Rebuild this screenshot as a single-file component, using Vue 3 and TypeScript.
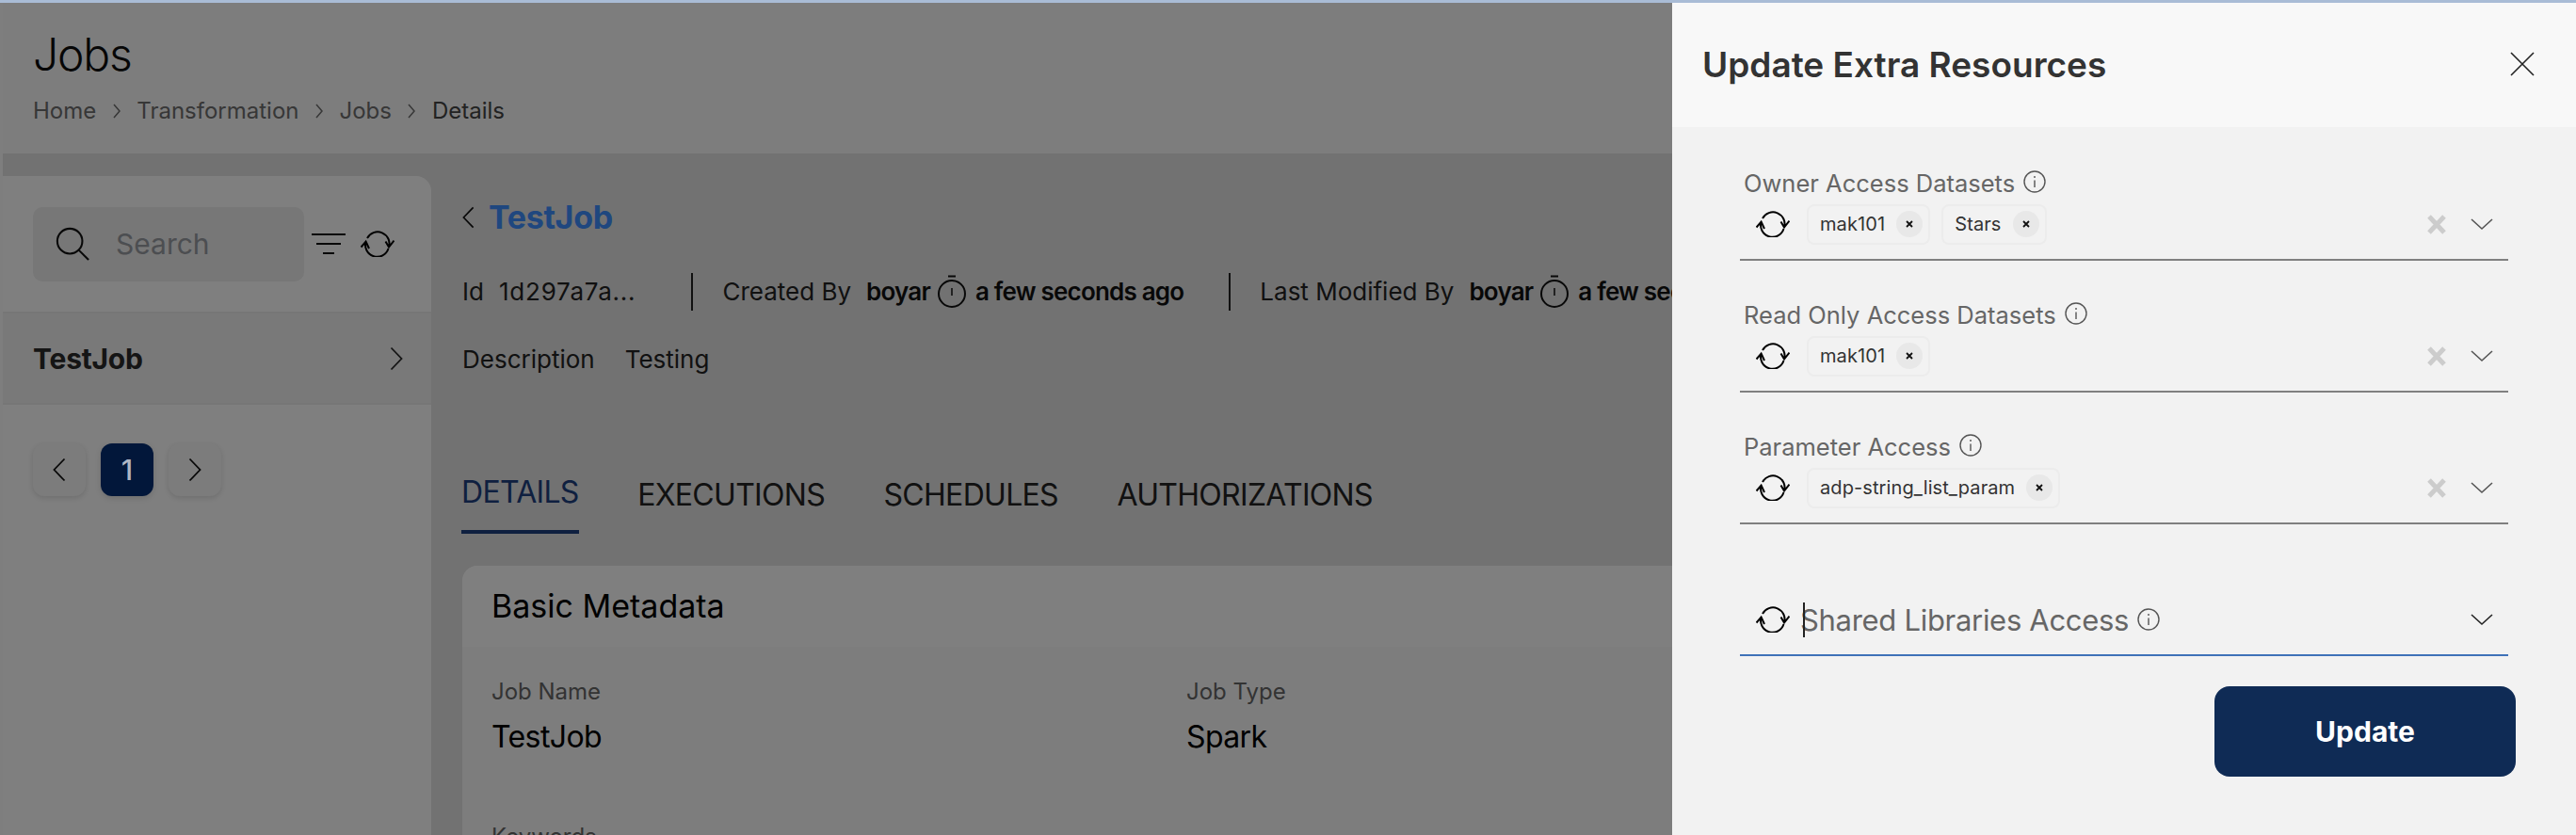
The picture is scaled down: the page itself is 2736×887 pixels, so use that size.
<template>
  <div class="app">
    <div class="top-strip"></div>
    <div class="stage">
      <header class="page-head">
        <h1 class="page-title">Jobs</h1>
        <nav class="crumbs">
          <template v-for="(c, i) in crumbs" :key="c">
            <span :class="{ 'crumb-last': i === crumbs.length - 1 }">{{ c }}</span>
            <svg v-if="i < crumbs.length - 1" class="crumb-sep" viewBox="0 0 10 18"><path d="M2 2l6 7-6 7" /></svg>
          </template>
        </nav>
      </header>

      <div class="page-body">
        <aside class="sidebar">
          <div class="side-tools">
            <div class="search-box">
              <svg class="search-icon" viewBox="0 0 38 38"><circle cx="16" cy="16" r="14" /><path d="M26 26l11 11" /></svg>
              <span class="search-text">Search</span>
            </div>
            <svg class="filter-icon" viewBox="0 0 36 24"><path d="M0 2h36M5 12h26M12 22h12" /></svg>
            <svg class="sync-icon side-sync" viewBox="0 0 36 28"><path :d="syncPath" /></svg>
          </div>
          <div class="job-row">
            <span>TestJob</span>
            <svg class="chev-right" viewBox="0 0 14 26"><path d="M1.500 1.500L12.500 13l-11 11.500" /></svg>
          </div>
          <div class="pager">
            <div class="page-btn"><svg viewBox="0 0 14 26"><path d="M12.500 1.500L1.500 13l11 11.500" /></svg></div>
            <div class="page-btn page-active">1</div>
            <div class="page-btn"><svg viewBox="0 0 14 26"><path d="M1.500 1.500L12.500 13l-11 11.500" /></svg></div>
          </div>
        </aside>

        <main class="main">
          <div class="job-title">
            <svg class="back" viewBox="0 0 14 26"><path d="M12.500 1.500L1.500 13l11 11.500" /></svg>
            <span>TestJob</span>
          </div>
          <div class="meta">
            <span>Id</span><span class="meta-id">1d297a7a...</span>
            <i class="meta-sep"></i>
            <span>Created By</span><b class="meta-user">boyar</b>
            <svg class="clock" viewBox="0 0 30 36"><path d="M11 1.500h8" /><circle cx="15" cy="20" r="14" /><path class="tick" d="M15 14v8" /></svg>
            <b class="meta-when">a few seconds ago</b>
            <i class="meta-sep"></i>
            <span>Last Modified By</span><b class="meta-user">boyar</b>
            <svg class="clock" viewBox="0 0 30 36"><path d="M11 1.500h8" /><circle cx="15" cy="20" r="14" /><path class="tick" d="M15 14v8" /></svg>
            <b class="meta-when">a few seconds ago</b>
          </div>
          <div class="desc"><span>Description</span><span>Testing</span></div>
          <div class="tabs">
            <div v-for="(t, i) in tabs" :key="t" :class="['tab', { 'tab-active': i === 0 }]">{{ t }}</div>
          </div>
          <section class="card">
            <div class="card-head">Basic Metadata</div>
            <div class="card-body">
              <div v-for="f in metadata" :key="f.label" class="card-field">
                <div class="field-label">{{ f.label }}</div>
                <div class="field-value">{{ f.value }}</div>
              </div>
            </div>
          </section>
        </main>
      </div>

      <div class="backdrop"></div>

      <aside class="drawer">
        <div class="drawer-head">
          <span class="drawer-title">Update Extra Resources</span>
          <svg class="close" viewBox="0 0 26 26"><path d="M1 1l24 24M25 1L1 25" /></svg>
        </div>
        <div class="drawer-body">
          <div v-for="f in fields" :key="f.label" class="res-field">
            <div class="res-label">
              <span>{{ f.label }}</span>
              <svg class="info" viewBox="0 0 24 24"><circle cx="12" cy="12" r="11" /><path d="M12 6v2M12 10.500v7.500" /></svg>
            </div>
            <div class="res-control">
              <svg class="sync-icon" viewBox="0 0 36 28"><path :d="syncPath" /></svg>
              <div v-for="c in f.chips" :key="c" class="chip">
                <span>{{ c }}</span>
                <span class="chip-x"><svg viewBox="0 0 8 8"><path d="M1 1l6 6M7 1L1 7" /></svg></span>
              </div>
              <svg class="clear" viewBox="0 0 20 21"><path d="M2 2l16 17M18 2L2 19" /></svg>
              <svg class="chev-down" viewBox="0 0 24 14"><path d="M1 2l11 10 11-10" /></svg>
            </div>
          </div>

          <div class="res-control res-focus">
            <svg class="sync-icon" viewBox="0 0 36 28"><path :d="syncPath" /></svg>
            <div class="placeholder">
              <i class="caret"></i>
              <span>Shared Libraries Access</span>
              <svg class="info" viewBox="0 0 24 24"><circle cx="12" cy="12" r="11" /><path d="M12 6v2M12 10.500v7.500" /></svg>
            </div>
            <svg class="chev-down chev-dark" viewBox="0 0 24 14"><path d="M1 2l11 10 11-10" /></svg>
          </div>

          <div class="actions">
            <button class="update-btn" type="button">Update</button>
          </div>
        </div>
      </aside>
    </div>
  </div>
</template>

<script setup lang="ts">
const crumbs = ['Home', 'Transformation', 'Jobs', 'Details']
const tabs = ['DETAILS', 'EXECUTIONS', 'SCHEDULES', 'AUTHORIZATIONS']

// two open arcs, each ending in its own arrowhead
const syncPath =
  'M7 8A12.5 12.5 0 0 1 30 17.500M26.500 11.500l3.500 6 5.500-7M29.500 19A12.500 12.500 0 0 1 5.600 11.500M0.500 17.500l5.100-6 3.400 7.500'

const metadata = [
  { label: 'Job Name', value: 'TestJob' },
  { label: 'Job Type', value: 'Spark' },
  { label: 'Keywords', value: '' }
]

const fields = [
  { label: 'Owner Access Datasets', chips: ['mak101', 'Stars'] },
  { label: 'Read Only Access Datasets', chips: ['mak101'] },
  { label: 'Parameter Access', chips: ['adp-string_list_param'] }
]
</script>

<style>
html,
body {
  margin: 0;
  background: #f2f2f2;
}
</style>

<style scoped>
.app {
  width: 2736px;
  height: 887px;
  overflow: hidden;
  font-family: Inter, "Liberation Sans", sans-serif;
  color: #111;
}

svg {
  flex: none;
  display: block;
  fill: none;
  stroke: currentColor;
  stroke-width: 2;
}

.top-strip {
  height: 3px;
  background: #a9bcd6;
}

.stage {
  position: relative;
  height: 884px;
  padding-left: 3px;
  box-sizing: border-box;
  background: #fcfcfc;
  overflow: hidden;
}

.page-head {
  height: 160px;
  box-sizing: border-box;
  padding: 25px 0 0 32px;
  background: #fafafa;
}

.page-title {
  margin: 0;
  font-size: 48px;
  font-weight: 300;
  line-height: 60px;
  letter-spacing: -1.2px;
  color: #0c0c0c;
}

.crumbs {
  display: flex;
  align-items: center;
  gap: 15.5px;
  margin-top: 14px;
  font-size: 24px;
  line-height: 32px;
  color: #6e6e6e;
}

.crumb-last {
  color: #444;
}

.crumb-sep {
  width: 10px;
  height: 18px;
  margin: 0 1px;
  stroke-width: 1.5;
}

.page-body {
  display: flex;
  height: 724px;
  background: #e4e4e4;
  padding-top: 24px;
}

.sidebar {
  width: 455px;
  flex: none;
  background: #fff;
  border-top-right-radius: 16px;
}

.side-tools {
  display: flex;
  align-items: center;
  height: 144px;
  box-sizing: border-box;
  padding: 0 0 0 32px;
}

.search-box {
  display: flex;
  align-items: center;
  width: 288px;
  height: 79px;
  box-sizing: border-box;
  padding-left: 24px;
  border-radius: 10px;
  background: #eeeeee;
}

.search-icon {
  width: 36px;
  height: 36px;
  stroke-width: 2.2;
  color: #111;
}

.search-text {
  margin-left: 28px;
  font-size: 30px;
  color: #999ca3;
}

.filter-icon {
  width: 36px;
  height: 24px;
  margin-left: 8px;
  color: #111;
}

.sync-icon {
  width: 36px;
  height: 28px;
  color: #000;
}

.side-sync {
  margin-left: 16px;
}

.job-row {
  display: flex;
  align-items: center;
  justify-content: space-between;
  height: 99px;
  box-sizing: border-box;
  padding: 0 30px 0 32px;
  background: #f2f2f2;
  border-top: 2px solid #ececec;
  border-bottom: 2px solid #ececec;
  font-size: 30px;
  font-weight: 700;
  letter-spacing: -0.2px;
  color: #2a2a2a;
}

.chev-right {
  width: 14px;
  height: 26px;
  stroke-width: 1.8;
}

.pager {
  display: flex;
  gap: 16px;
  padding: 41px 0 0 32px;
}

.page-btn {
  display: flex;
  align-items: center;
  justify-content: center;
  width: 56px;
  height: 56px;
  border-radius: 12px;
  background: #f8f8f8;
  box-shadow: 0 2px 6px rgba(0, 0, 0, 0.14);
  font-size: 30px;
  font-weight: 500;
}

.page-btn svg {
  width: 14px;
  height: 26px;
  stroke-width: 1.8;
}

/* the selected page keeps its own dim tone above the backdrop */
.page-active {
  position: relative;
  z-index: 1;
  background: #02173a;
  color: #aeb6c4;
}

.main {
  flex: 1;
  min-width: 0;
  padding: 21px 0 0 33px;
  box-sizing: border-box;
}

.job-title {
  display: flex;
  align-items: center;
  gap: 15px;
  height: 44px;
  font-size: 34px;
  font-weight: 700;
  letter-spacing: -0.3px;
  color: #3e8eff;
}

.back {
  width: 13px;
  height: 26px;
  stroke-width: 1.8;
  color: #111;
  margin-top: 2px;
}

.meta {
  display: flex;
  align-items: center;
  gap: 10px;
  height: 40px;
  margin-top: 38px;
  font-size: 26px;
  line-height: 40px;
  color: #222;
  white-space: nowrap;
}

.meta b {
  font-weight: 600;
  letter-spacing: -0.8px;
  color: #111;
}

.meta-id {
  margin: 0 11px 0 6px;
  letter-spacing: 0.8px;
}

.meta-sep {
  width: 2px;
  height: 40px;
  margin: 0 21px 0 38px;
  background: #222;
}

.meta-user {
  margin-left: 6px;
}

.clock {
  width: 30px;
  height: 36px;
  margin-left: -2px;
  color: #111;
}

.clock .tick {
  stroke-width: 1.5;
}

.desc {
  display: flex;
  gap: 32px;
  height: 40px;
  margin-top: 32px;
  font-size: 26px;
  line-height: 40px;
  color: #222;
}

.tabs {
  display: flex;
  gap: 62.5px;
  margin: 104px 0 0 -1px;
}

.tab {
  height: 61px;
  font-size: 32px;
  line-height: 40px;
  letter-spacing: -0.7px;
  color: #222;
  box-sizing: border-box;
}

.tab-active {
  position: relative;
  top: -3px;
  height: 64px;
  margin-bottom: -3px;
  padding-bottom: 17px;
  color: #1e4080;
  border-bottom: 4px solid #1e4080;
}

.card {
  margin-top: 34px;
  border-radius: 16px 0 0 0;
  background: #fafafa;
}

.card-head {
  height: 86px;
  box-sizing: border-box;
  padding: 22px 0 0 31px;
  font-size: 34px;
  font-weight: 400;
  line-height: 42px;
  color: #000;
  background: #fff;
  border-radius: 16px 0 0 0;
}

.card-body {
  display: grid;
  grid-template-columns: 738px 738px;
  row-gap: 70px;
  padding: 32px 0 0 31px;
}

.field-label {
  font-size: 24px;
  line-height: 32px;
  color: #666;
}

.field-value {
  margin-top: 12px;
  min-height: 40px;
  font-size: 32px;
  line-height: 40px;
  letter-spacing: -0.6px;
  color: #000;
}

.backdrop {
  position: absolute;
  inset: 0;
  background: rgba(0, 0, 0, 0.5);
}

.drawer {
  position: absolute;
  top: 0;
  right: 0;
  bottom: 0;
  width: 960px;
  background: #f2f2f2;
}

.drawer-head {
  display: flex;
  align-items: center;
  justify-content: space-between;
  height: 132px;
  box-sizing: border-box;
  padding: 0 44px 2px 32px;
  background: #f8f8f8;
}

.drawer-title {
  font-size: 37px;
  font-weight: 600;
  color: #333;
}

.close {
  width: 26px;
  height: 26px;
  stroke-width: 1.6;
  color: #222;
}

.drawer-body {
  padding: 44px 72px 0;
}

.res-field {
  margin-bottom: 42px;
}

.res-label {
  display: flex;
  align-items: center;
  gap: 9px;
  height: 32px;
  padding-left: 4px;
  font-size: 25.5px;
  line-height: 32px;
  color: #666;
}

.info {
  width: 24px;
  height: 24px;
  stroke-width: 1.4;
  color: #555;
  margin-top: -4px;
}

.res-control {
  display: flex;
  align-items: center;
  gap: 12px;
  height: 66px;
  box-sizing: border-box;
  padding: 0 16px 10px 17px;
  border-bottom: 2px solid #808080;
}

.res-control > .sync-icon {
  margin-right: 6px;
}

.chip {
  display: flex;
  align-items: center;
  height: 43px;
  box-sizing: border-box;
  padding: 0 6px 0 12px;
  border: 2px solid #ececec;
  border-radius: 8px;
  font-size: 20px;
  letter-spacing: 0.1px;
  color: #333;
}

.chip-x {
  display: flex;
  align-items: center;
  justify-content: center;
  width: 28px;
  height: 28px;
  margin-left: 12px;
  border-radius: 50%;
  background: #e8e8e8;
  color: #111;
}

.chip-x svg {
  width: 8px;
  height: 8px;
  stroke-width: 1.8;
}

.clear {
  width: 20px;
  height: 21px;
  margin-left: auto;
  stroke-width: 5;
  color: #cccccc;
}

.chev-down {
  width: 24px;
  height: 14px;
  margin-left: 14px;
  stroke-width: 1.6;
  color: #555;
}

.chev-dark {
  margin-left: auto;
  color: #222;
}

.res-focus {
  height: 98px;
  padding-top: 22px;
  padding-bottom: 0;
  border-bottom-color: #3f72b8;
}

.placeholder {
  position: relative;
  display: flex;
  align-items: center;
  gap: 9px;
  margin-left: -7px;
  font-size: 31px;
  letter-spacing: -0.3px;
  color: #666;
}

.placeholder .info {
  margin-top: 0;
}

.caret {
  position: absolute;
  left: 3px;
  top: 0;
  width: 2px;
  height: 37px;
  background: #222;
}

.actions {
  display: flex;
  justify-content: flex-end;
  margin: 32px -8px 0 0;
}

.update-btn {
  width: 320px;
  height: 96px;
  border: none;
  border-radius: 16px;
  background: #0f2b55;
  color: #fff;
  font-family: inherit;
  font-size: 30px;
  font-weight: 700;
}
</style>
